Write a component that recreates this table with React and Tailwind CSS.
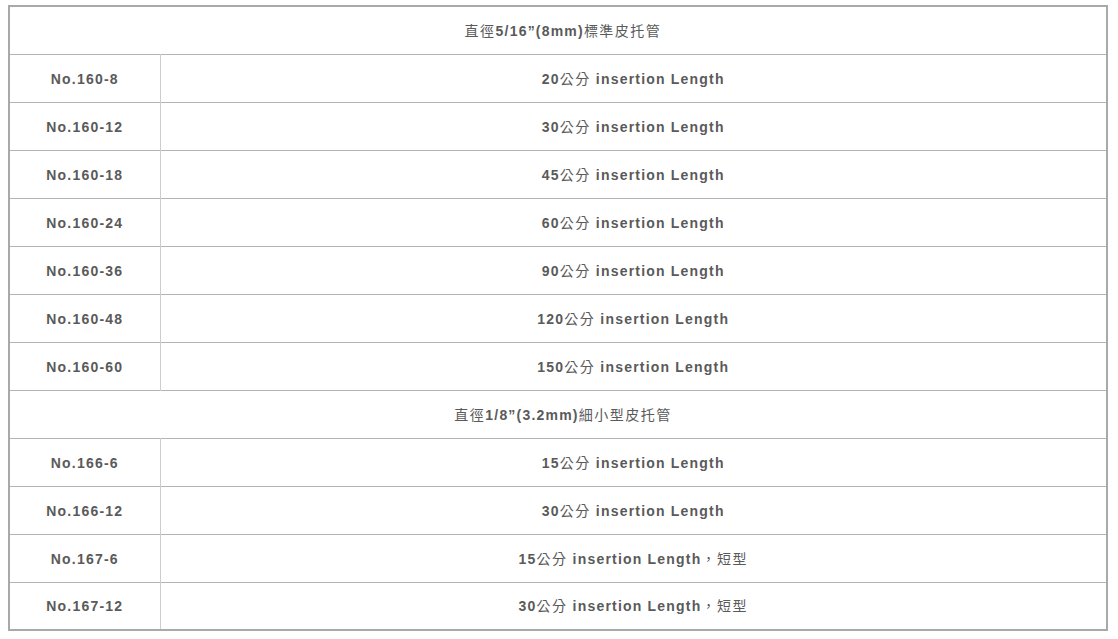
const groups = [
  {
    title: ["直徑", "5/16”(8mm)", "標準皮托管"],
    rows: [
      ["No.160-8", "20", ""],
      ["No.160-12", "30", ""],
      ["No.160-18", "45", ""],
      ["No.160-24", "60", ""],
      ["No.160-36", "90", ""],
      ["No.160-48", "120", ""],
      ["No.160-60", "150", ""],
    ],
  },
  {
    title: ["直徑", "1/8”(3.2mm)", "細小型皮托管"],
    rows: [
      ["No.166-6", "15", ""],
      ["No.166-12", "30", ""],
      ["No.167-6", "15", "，短型"],
      ["No.167-12", "30", "，短型"],
    ],
  },
];

const cjk = "font-normal tracking-[1.5px]";

export default function App() {
  return (
    <div className="bg-white min-h-[639px] pt-[5px] pl-[8px]">
      <table
        className="w-[1100px] border-collapse border-2 border-[#a9a9a9] text-[14px] font-bold tracking-[1.2px] text-[#5a5a5a] text-center"
        style={{ fontFamily: '"Liberation Sans", Arial, "Noto Sans CJK TC", sans-serif' }}
      >
        <tbody>
          {groups.map((g) => (
            <>
              <tr key={g.title[1]} className="h-[48px] border-b border-[#b4b4b4]">
                <td colSpan={2} className="pl-[10px] pt-[2px]">
                  <span className={cjk}>{g.title[0]}</span>
                  {g.title[1]}
                  <span className={cjk}>{g.title[2]}</span>
                </td>
              </tr>
              {g.rows.map(([no, cm, extra]) => (
                <tr key={no} className="h-[48px] border-b border-[#b4b4b4]">
                  <td className="w-[151px] pt-[2px] border-r border-[#cdcdcd]">{no}</td>
                  <td className="pt-[2px]">
                    {cm}
                    <span className={cjk}>公分</span> insertion Length
                    {extra && <span className={cjk}>{extra}</span>}
                  </td>
                </tr>
              ))}
            </>
          ))}
        </tbody>
      </table>
    </div>
  );
}
